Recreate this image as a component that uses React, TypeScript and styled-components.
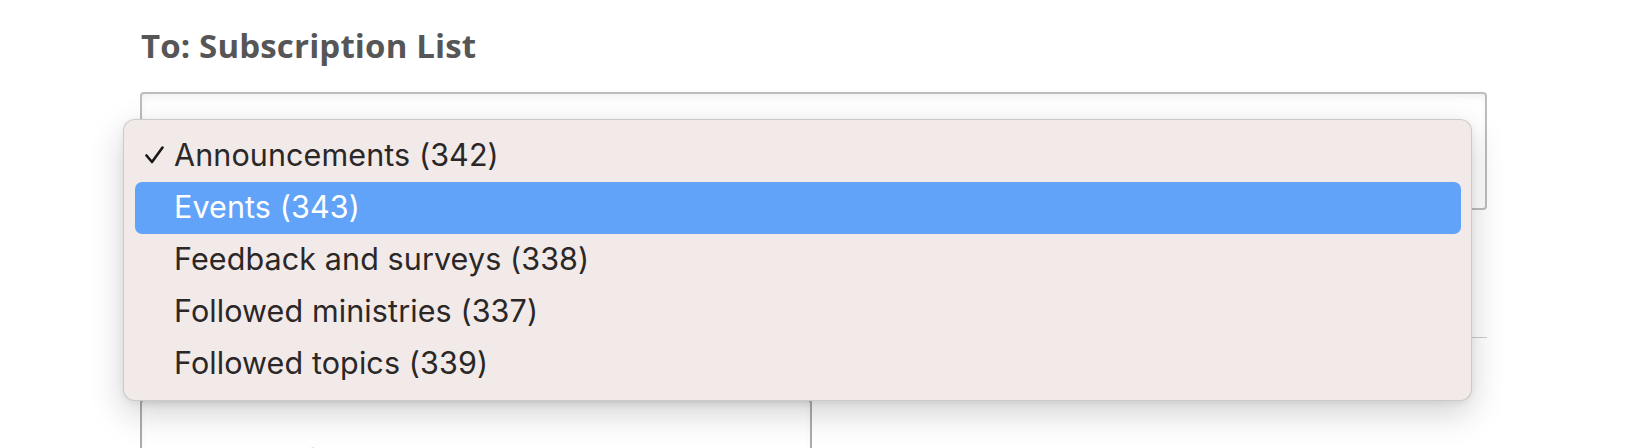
import React from "react";
import styled, { createGlobalStyle } from "styled-components";

const Global = createGlobalStyle`
  html, body { margin: 0; padding: 0; background: #ffffff; }
  body { overflow: hidden; }
  * { box-sizing: border-box; }
`;

const Page = styled.div`
  position: relative;
  width: 1628px;
  height: 448px;
  padding: 0 141px 0 140px;
  overflow: hidden;
`;

const Title = styled.h2`
  margin: 0;
  padding-top: 26px;
  height: 92px;
  font-family: "Open Sans", "Lato", sans-serif;
  font-weight: 700;
  font-size: 33px;
  line-height: 40px;
  letter-spacing: 0.15px;
  color: #565656;
  padding-left: 1px;
`;

const FieldWrap = styled.div`
  position: relative;
`;

const Field = styled.div<{ $height: number; $width?: number }>`
  height: ${(p) => p.$height}px;
  width: ${(p) => (p.$width ? `${p.$width}px` : "100%")};
  border: 2px solid #bdbdbd;
  border-radius: 4px;
  background: #fff;
  box-shadow: inset 0 5px 8px -3px rgba(0, 0, 0, 0.08);
`;

const Separator = styled.div`
  margin-top: 127px;
  height: 1px;
  background: #cbcbcb;
`;

const LowerField = styled(Field)`
  margin-top: 61px;
  border-color: #acacac;
  padding: 41px 0 0 64px;
  font-family: "Inter", sans-serif;
  font-size: 28px;
  line-height: 34px;
  color: #d6d6d6;
`;

const Menu = styled.ul`
  position: absolute;
  left: -17px;
  top: 26.5px;
  width: 1349px;
  margin: 0;
  padding: 10.5px 10px 10px 11px;
  list-style: none;
  background: #f1eae9;
  border: 1px solid rgba(0, 0, 0, 0.14);
  border-radius: 12px;
  box-shadow: 0 12px 34px rgba(0, 0, 0, 0.18), 0 2px 6px rgba(0, 0, 0, 0.06);
`;

const Item = styled.li<{ $active?: boolean }>`
  position: relative;
  display: flex;
  align-items: center;
  height: 52px;
  padding-left: 39px;
  padding-bottom: 3px;
  border-radius: 7px;
  font-family: "Inter", "Liberation Sans", sans-serif;
  font-size: 30.5px;
  letter-spacing: 0.1px;
  color: ${(p) => (p.$active ? "#ffffff" : "#2b2727")};
  background: ${(p) => (p.$active ? "#61a3f8" : "transparent")};
`;

const Check = styled.svg`
  position: absolute;
  left: 10px;
  top: 16px;
  width: 19px;
  height: 18px;
`;

const items = [
  { label: "Announcements (342)", checked: true },
  { label: "Events (343)", active: true },
  { label: "Feedback and surveys (338)" },
  { label: "Followed ministries (337)" },
  { label: "Followed topics (339)" },
];

export default function App() {
  return (
    <>
      <Global />
      <Page>
        <Title>To: Subscription List</Title>
        <FieldWrap>
          <Field $height={118} />
          <Menu>
            {items.map((it) => (
              <Item key={it.label} $active={it.active}>
                {it.checked && (
                  <Check viewBox="0 0 19 18">
                    <path
                      d="M1.5 9.5 L7 16 L17.5 1.5"
                      fill="none"
                      stroke="#1c1616"
                      strokeWidth="2.6"
                      strokeLinecap="round"
                      strokeLinejoin="round"
                    />
                  </Check>
                )}
                {it.label}
              </Item>
            ))}
          </Menu>
        </FieldWrap>
        <Separator />
        <LowerField $height={120} $width={672}>
          Add a Title
        </LowerField>
      </Page>
    </>
  );
}
